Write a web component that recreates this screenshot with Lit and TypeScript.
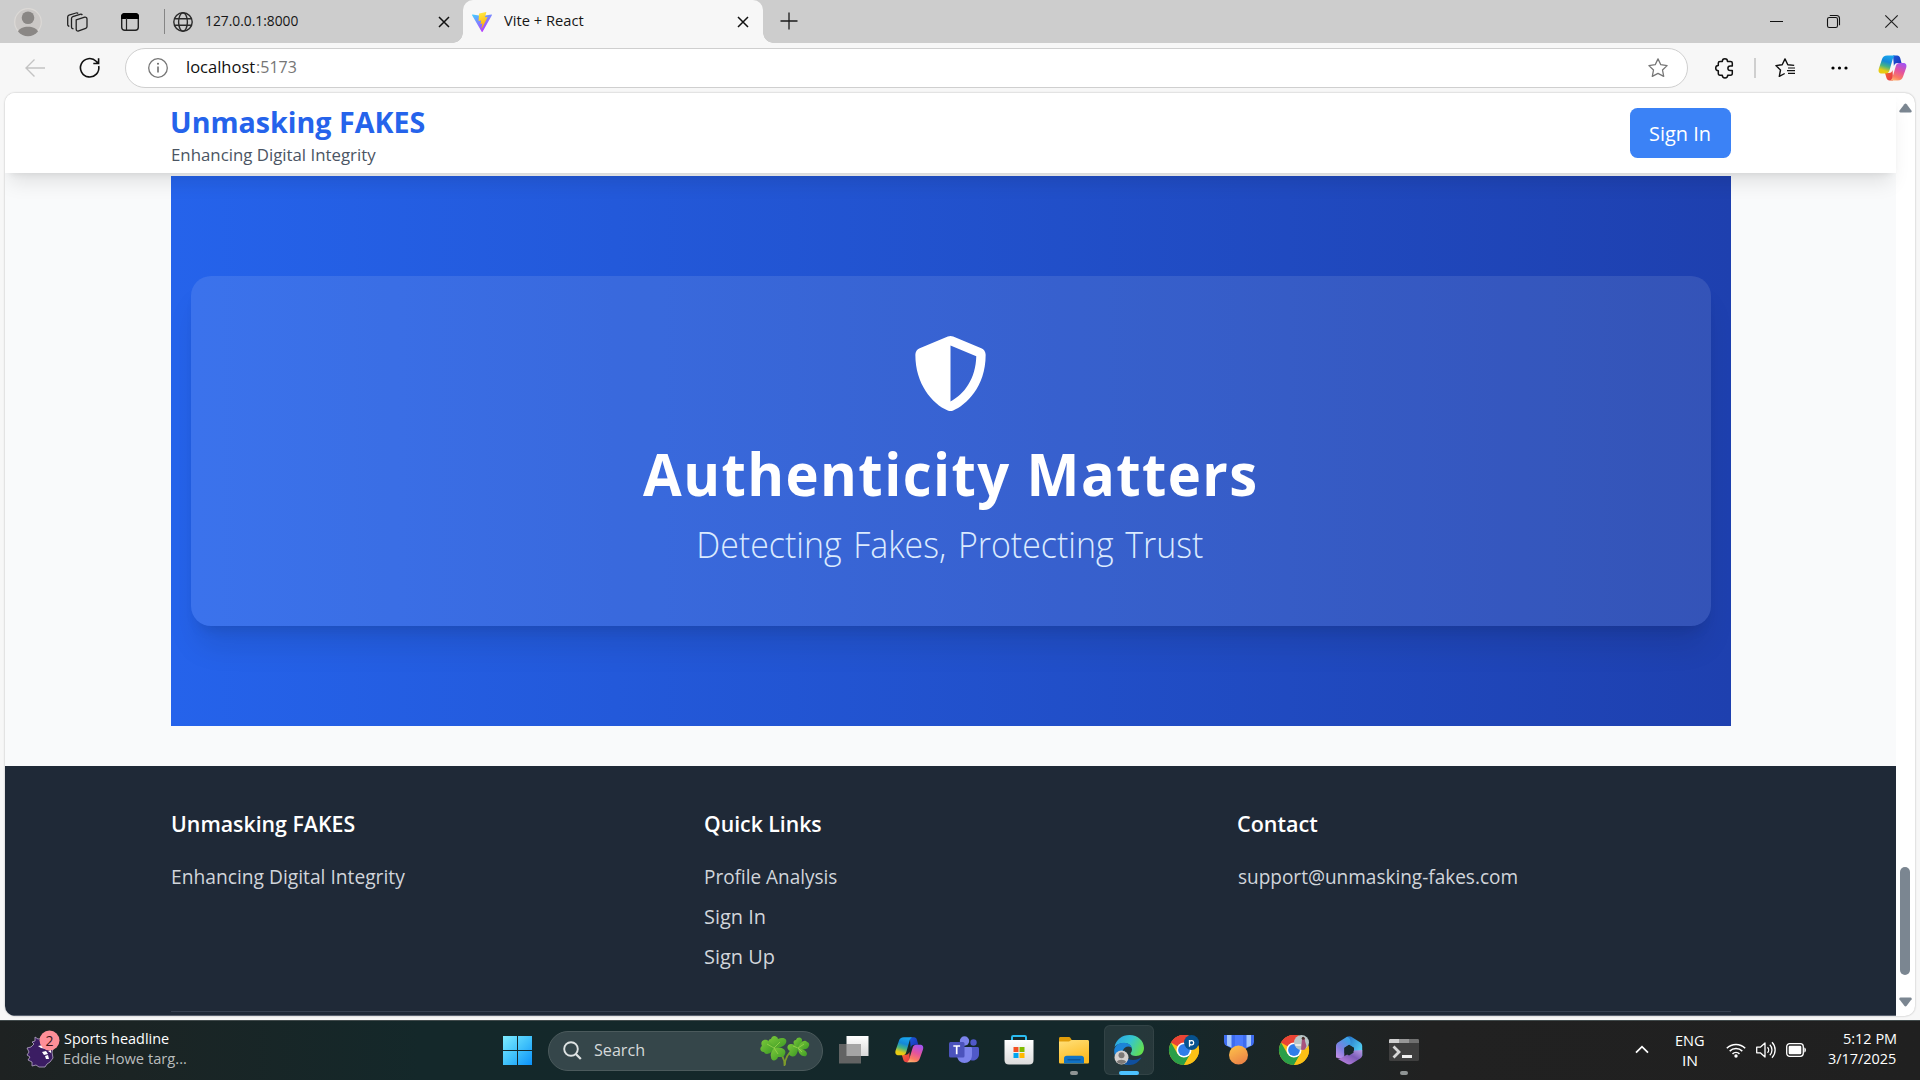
import { LitElement, html, css, svg } from "lit";
import { customElement, property } from "lit/decorators.js";

/* Single-line label whose glyphs span exactly `w` pixels. */
@customElement("fit-text")
class FitText extends LitElement {
  @property() text = "";
  @property({ type: Number }) w = 100;
  static styles = css`
    :host { display: block; flex: none; white-space: pre; }
    .t { display: inline-block; transform-origin: 0 0; vertical-align: top; }
  `;
  private ink = { left: 0, width: 0 };
  firstUpdated() {
    const cs = getComputedStyle(this);
    const ctx = document.createElement("canvas").getContext("2d") as any;
    ctx.font = `${cs.fontWeight} ${cs.fontSize} "Open Sans"`;
    if (cs.letterSpacing !== "normal") ctx.letterSpacing = cs.letterSpacing;
    if (parseFloat(cs.wordSpacing)) ctx.wordSpacing = cs.wordSpacing;
    const m = ctx.measureText(this.text);
    this.ink = { left: -m.actualBoundingBoxLeft, width: m.actualBoundingBoxRight + m.actualBoundingBoxLeft };
    this.requestUpdate();
  }
  render() {
    const s = this.ink.width ? this.w / this.ink.width : 1;
    this.style.width = `${this.w}px`;
    return html`<span class="t" style="transform: translateX(${-this.ink.left * s}px) scaleX(${s})">${this.text}</span>`;
  }
}

const closeX = (n: number) => html`<svg class="x" width="12" height="12" viewBox="0 0 12 12"><path d="M1 1L11 11M11 1L1 11" stroke="#111" stroke-width="${n}" fill="none"/></svg>`;

const copilot = (id: string) => svg`
  <defs>
    <linearGradient id="${id}a" x1=".6" y1="0" x2=".3" y2="1"><stop offset="0" stop-color="#19a6ee"/><stop offset=".35" stop-color="#1488d8"/><stop offset=".6" stop-color="#45b384"/><stop offset=".85" stop-color="#e8cb13"/></linearGradient>
    <linearGradient id="${id}b" x1=".7" y1="0" x2=".3" y2="1"><stop offset="0" stop-color="#a453f0"/><stop offset=".45" stop-color="#e4539d"/><stop offset=".8" stop-color="#fb7a62"/><stop offset="1" stop-color="#fcb070"/></linearGradient>
    <linearGradient id="${id}c" x1="0" y1="0" x2="1" y2="1"><stop offset="0" stop-color="#1b59d8"/><stop offset="1" stop-color="#1a30b8"/></linearGradient>
    <linearGradient id="${id}d" x1="0" y1="0" x2="1" y2="1"><stop offset="0" stop-color="#f8672c"/><stop offset="1" stop-color="#e4374c"/></linearGradient>
  </defs>
  <path d="M15 1.500h4.200c1.600 0 2.500 1 3 2.600L23.500 9h-4c-2 0-3 1-3.600 3z" fill="url(#${id}c)"/>
  <path d="M15 26.500h-3.500c-1.600 0-2.500-1-3-2.500L7 19h4c2 0 3-1 3.600-3z" fill="url(#${id}d)"/>
  <path d="M9.200 1.500h8.300c-1.700.6-2.300 2-2.900 4l-3 10.500c-.6 2-1.400 3.500-3.900 3.500H4c-3 0-4-1.800-3.200-4.800L3.900 5.600C4.700 3 6.400 1.500 9.200 1.500z" fill="url(#${id}a)"/>
  <path d="M19.800 26.500h-8c1.700-.6 2.300-2 2.900-4l3-10c.6-2 1.500-3.500 3.900-3.500H25c3 0 4 1.800 3.200 4.800l-3.100 8.600c-.9 2.600-2.500 4.100-5.300 4.100z" fill="url(#${id}b)"/>`;

const chrome = svg`
  <circle cx="15" cy="15" r="15" fill="#fbc116"/>
  <path d="M15 15L2 7.500A15 15 0 0 1 28 7.500z" fill="#ea4335"/>
  <path d="M2 7.500A15 15 0 0 1 28 7.500H15z" fill="#ea4335"/>
  <path d="M2 7.500L8.500 18.750L15 22.500L15 30A15 15 0 0 1 2 7.500z" fill="#2a9f48"/>
  <path d="M15 30L21.500 18.750L15 15L8.500 18.750L15 22z" fill="#2a9f48"/>
  <path d="M15 30L21.500 18.750V7.500H28A15 15 0 0 1 15 30z" fill="#fbc116"/>
  <circle cx="15" cy="15" r="7.500" fill="#fff"/><circle cx="15" cy="15" r="5.900" fill="#2f7de9"/>`;

const clover = svg`
  <path d="M25 30C25 24 28 18 34 14M24.500 31C25 24 22 18 14 13" stroke="#7d9a2c" stroke-width="1.600" fill="none"/>
  <g fill="url(#leaf)">
    <path d="M14 13C7 12 7 4 11 4C12 -1 18 1 18 4C22 2 28 3 26 8C24 12 19 13 14 13z"/>
    <path d="M14 13C11 20 5 20 4 17C-1 17 0 12 2 11C0 7 3 4 7 5C11 7 13 10 14 13z"/>
    <path d="M14 13C22 11 27 15 25 19C24 23 20 22 18 22C17 26 11 27 11 22C10 18 12 16 14 13z"/>
    <path d="M38 13C33 11 32 5 36 5C37 1 43 2 42 6C41 10 40 12 38 13z"/>
    <path d="M38 13C40 7 45 4 47 7C51 8 49 13 46 14C43 15 40 14 38 13z"/>
    <path d="M38 13C45 14 49 18 46 21C42 22 38 19 38 13z"/>
    <path d="M38 13C38 19 35 23 31 21C28 20 29 17 30 16C26 14 27 9 31 9C34 9 36 11 38 13z"/>
  </g>
  <path d="M14 13L7 9M14 13L20 7M14 13L18 19M38 13L33 11M38 13L42 17M38 13L44 9" stroke="#a9dd55" stroke-width=".8" opacity=".8"/>`;

const tasks = [
  { mark: "", art: svg`<path d="M7.500 1h22v20h-22z" fill="url(#tv)"/><path d="M0 9h22v19.500H0z" fill="#666" opacity=".95"/><path d="M7.500 9H22v12H7.500z" fill="#a5a5a5"/>` },
  { mark: "", art: svg`<g transform="translate(.8 .8)">${copilot("k")}</g>` },
  { mark: "", art: svg`
      <circle cx="24.500" cy="7.500" r="3.200" fill="#5059c9"/><circle cx="15.500" cy="6" r="4.700" fill="#7b83eb"/>
      <path d="M20 12h8.500c.8 0 1.500.6 1.500 1.500V19c0 4-3 6.500-6 6.500s-5-2-5-5z" fill="#5059c9"/>
      <path d="M9 12h12.500c1 0 1.500.6 1.500 1.500V20c0 5-3.500 8-7.500 8S8 25 8 20z" fill="#7b83eb"/>
      <rect x="0" y="7" width="15.500" height="15.500" rx="1.500" fill="#4b53bc"/>
      <path d="M4.300 11h6.800M7.700 11v8.300" stroke="#fff" stroke-width="1.700"/>` },
  { mark: "", art: svg`
      <path d="M8 7V2.200c0-.8.400-1.200 1.200-1.200h11.600c.8 0 1.200.4 1.200 1.200V7" fill="none" stroke="#2bbdf2" stroke-width="2"/>
      <path d="M.5 5h29v20c0 3-1.500 4.500-4.500 4.500H5C2 29.500.5 28 .5 25z" fill="url(#bag)"/>
      <path d="M9.500 12h5v5h-5z" fill="#f25022"/><path d="M15.500 12h5v5h-5z" fill="#7fba00"/><path d="M9.500 18h5v5h-5z" fill="#00a4ef"/><path d="M15.500 18h5v5h-5z" fill="#ffb900"/>` },
  { mark: "dot", art: svg`
      <path d="M0 3.500C0 2.500.6 2 1.500 2h8c1 0 1.500.3 2 1l1.500 2.500V8H0z" fill="#e19d0a"/>
      <path d="M0 6.500h10l2.500-1.500H28.500c1 0 1.500.6 1.500 1.500v20.500c0 1-.6 1.500-1.500 1.500h-27C.6 28.500 0 28 0 27z" fill="url(#fold)"/>
      <path d="M5 28.500V23.500c0-1.800 1-2.800 2.800-2.800h14.400c1.800 0 2.800 1 2.800 2.800v5z" fill="#1173c4"/><path d="M8.500 24.800h13" stroke="#0a4f93" stroke-width="1.200"/>` },
  { mark: "active", art: svg`
      <path d="M.5 12C2 4.500 8 0 15.500 0 24 0 30 6 30 13c0 5-3.500 8-8 8-3.500 0-5.500-1.500-5.500-2.500 0-.8 1.500-1.500 1.500-4C18 11 15 8 10.500 8 6 8 2 10 .5 12z" fill="url(#eg)"/>
      <path d="M.2 17C-.2 11 4.500 7.800 10 7.800c5 0 8 3.200 8 6.700-.3-1.800-1.500-3-3.500-3C9 11.500 8 17 9 20.500 10.500 26 15 29.500 18 29.300 9 31.500.8 26 .2 17z" fill="#1c84d8"/>
      <path d="M11.500 14C9 19 12 25 19 25c4 0 7-2 8.500-2.500C25 27 20.500 30 16 30 9 30 4.500 22 11.500 14z" fill="#0f4f9e"/>
      <circle cx="7.500" cy="22.500" r="7" fill="#d4d0ce"/><circle cx="7.500" cy="20.300" r="3" fill="#7d7977"/><path d="M2.700 27c1.500-3 8-3 9.600 0a7 7 0 0 1-9.600 0z" fill="#7d7977"/>` },
  { mark: "", art: svg`${chrome}<circle cx="22.500" cy="7.500" r="7.500" fill="#07528f"/><path d="M20.500 11.800V5M20.500 6.700c1-1.700 4.200-1.600 4.200 1s-3.200 2.700-4.200 1.100" fill="none" stroke="#fff" stroke-width="1.300"/>` },
  { mark: "", art: svg`
      <path d="M0 0h30v6.500c0 2-1 3.500-3 4.500l-6 3H9l-6-3c-2-1-3-2.500-3-4.500z" fill="#3d6cf0"/>
      <path d="M3 0h4.500v12.500L3 10.500zM22.500 0H27v10.500l-4.500 2z" fill="#a4c6fb"/><path d="M11 0h8v13h-8z" fill="#4b7bff"/>
      <circle cx="14.500" cy="20" r="9.500" fill="url(#med)"/>` },
  { mark: "", art: svg`${chrome}<circle cx="22.500" cy="7.500" r="7.500" fill="#b9c7c8"/><path d="M23 3.500c2-2 3.500.5 3 2.500l1.500 5-1.500 3.500c-1.500.6-3 .4-4 0l.5-5z" fill="#a8537e"/><circle cx="24.200" cy="3.300" r="1.500" fill="#4a302c"/><path d="M16 9h6v2h-5.500z" fill="#e8e8e2"/>` },
  { mark: "", art: svg`
      <path d="M13 1.800C14.300 1 16 1 17.300 1.800L26 7.200C27.500 8.200 28.200 9.500 28.200 11V21L20 16.500V12.800L10.500 7z" fill="url(#m1)"/>
      <path d="M13 1.800L4.300 7.200C2.700 8.200 2 9.500 2 11v11.500l8.300 2V12.800l6.200-4C17 5 15.500 2.500 13 1.800z" fill="url(#m2)"/>
      <path d="M28.200 15v5c0 1.500-.7 2.700-2 3.500l-8.500 5.200c-1.700 1-3.300 1-5 0L3 23.500c1.500.5 3 .2 4.500-.7L20 15.500z" fill="url(#m3)"/>
      <path d="M15 10.300l4.500 2.500v5L15 20.500l-4.500-2.600v-5z" fill="#17292c"/>` },
  { mark: "dot", art: svg`
      <rect x="0" y="4" width="30" height="22" rx="1.500" fill="#3f3f3f"/><path d="M0 8V5.500C0 4.500.6 4 1.500 4H10v4z" fill="#d0d0d0"/><path d="M10 4h10v4H10z" fill="#979797"/><path d="M20 4h8.500c.9 0 1.500.5 1.500 1.500V8H20z" fill="#707070"/>
      <path d="M4.500 11.500l5.500 5.500-5.500 5.500" fill="none" stroke="#d6d6d6" stroke-width="2.800"/><path d="M13 20h10v3H13z" fill="#eee"/>` },
];

@customElement("app-root")
class AppRoot extends LitElement {
  static styles = css`
    :host { display: block; width: 1920px; height: 1080px; overflow: hidden; font-family: "Open Sans", "Noto Sans", sans-serif; background: #f7f7f7; }
    * { box-sizing: border-box; }
    svg { display: block; flex: none; overflow: visible; }
    .screen { display: flex; flex-direction: column; height: 1080px; }

    .tabs { height: 43px; background: #cdcdcd; display: flex; align-items: center; flex: none; }
    .avatar { margin-left: 14px; }
    .spaces { margin-left: 25px; }
    .vtabs { margin-left: 33px; }
    .sep { width: 1px; height: 25px; background: #858585; margin-left: 25px; }
    .globe { margin-left: 8px; margin-top: 1px; }
    .label { font-size: 14.600px; line-height: 20px; color: #161616; margin: -4px 0 0 13px; }
    .tab1 { display: flex; align-items: center; width: 298px; height: 43px; }
    .tab1 .x { margin: 1px 0 0 140px; }
    .tab2 { position: relative; display: flex; align-items: center; width: 300px; height: 43px; background: #f7f7f7; border-radius: 10px 10px 0 0; }
    .tab2::before, .tab2::after { content: ""; position: absolute; bottom: 0; width: 10px; height: 10px; }
    .tab2::before { left: -10px; background: radial-gradient(circle at 0 0, transparent 9.500px, #f7f7f7 10px); }
    .tab2::after { right: -10px; background: radial-gradient(circle at 100% 0, transparent 9.500px, #f7f7f7 10px); }
    .tab2 .vite { margin: 1px 0 0 9px; }
    .tab2 .label { margin-left: 11.500px; }
    .tab2 .x { margin: 1px 0 0 153.500px; }
    .plus { margin: -1px 0 0 17px; }
    .win { display: flex; align-items: center; margin-left: auto; padding-right: 22.500px; gap: 44.500px; }

    .tools { height: 50px; flex: none; display: flex; align-items: center; }
    .back { margin: -1px 0 0 25px; }
    .reload { margin-left: 35px; }
    .omni { margin-left: 25px; width: 1563px; height: 40px; border: 1px solid #cfcfcf; border-radius: 20px; background: #fff; display: flex; align-items: center; padding: 0 19px 0 22px; }
    .url { display: flex; font-size: 17.200px; line-height: 24px; margin: -2px 0 0 19px; color: #111; }
    .url .port { color: #767676; margin-left: 2px; }
    .omni .star { margin-left: auto; }
    .ext { margin-left: 27px; }
    .tsep { width: 2px; height: 20px; background: #cfcfcf; margin-left: 20px; }
    .fav { margin-left: 19px; }
    .more { margin-left: 36px; }
    .cop { margin-left: 30px; }

    .page { height: 923px; margin: 0 5px; flex: none; display: flex; border-radius: 10px; overflow: hidden; background: #fff; box-shadow: 0 0 2px rgba(0, 0, 0, .3); }
    .view { width: 1891px; background: #f9fafb; display: flex; flex-direction: column; }
    .head { position: relative; height: 80px; flex: none; background: #fff; padding: 0 165px 0 166px; display: flex; justify-content: space-between; align-items: center; box-shadow: 0 12.500px 18.750px -3.750px rgba(0, 0, 0, .1), 0 5px 7.500px -5px rgba(0, 0, 0, .1); }
    .brand { color: #2563eb; font-weight: 700; font-size: 29.400px; line-height: 40px; margin: 3px 0 0 .7px; }
    .tag { color: #4b5563; font-size: 17.100px; line-height: 25px; margin-left: .5px; }
    .btn { width: 101px; height: 50px; border: 0; border-radius: 7.500px; background: #3b82f6; color: #fff; display: flex; justify-content: center; font-size: 19.400px; line-height: 52px; padding-right: 1px; }
    .hero { width: 1560px; height: 550px; margin: 3px 0 40px 166px; flex: none; padding: 100px 20px; background: linear-gradient(90deg, #2563eb, #1e40af); }
    .card { height: 350px; border-radius: 20px; background: rgba(255, 255, 255, .1); box-shadow: 0 25px 31px -6px rgba(0, 0, 0, .1), 0 10px 12.500px -7.500px rgba(0, 0, 0, .1); display: flex; flex-direction: column; align-items: center; padding: 60px 1.500px 0 0; color: #fff; }
    .h1 { font-size: 58.800px; font-weight: 700; line-height: 75px; letter-spacing: 1.500px; margin: 25px 0 0 -2px; }
    .h2 { font-size: 36.900px; font-weight: 300; line-height: 50px; margin: 8px 0 0 2px; color: #dbeafe; word-spacing: 3px; }
    .foot { height: 250px; flex: none; background: #1f2937; padding: 40px 165px 0 166px; display: flex; flex-direction: column; border-bottom: 1px solid #5a6270; }
    .cols { display: grid; grid-template-columns: 533px 533px 1fr; height: 205px; }
    .ft { font-size: 22px; font-weight: 600; line-height: 35px; color: #fff; margin: 0 0 21px .6px; }
    .fl { font-size: 19.500px; line-height: 30px; color: #d1d5db; margin: 0 0 10px .6px; }
    .rule { height: 1px; background: #374151; }
    .scroll { width: 19px; display: flex; flex-direction: column; align-items: center; padding: 10px 1px 9px 0; }
    .thumb { width: 10px; height: 108px; border-radius: 5px; background: #7b8691; margin: auto 0 22px; }

    .bar { margin-top: 4px; height: 60px; border-top: 1px solid #414a4b; display: flex; align-items: center; background: linear-gradient(90deg, #1e2222 0, #1b2424 130px, #14282a 420px, #14282b 1140px, #1b2526 1290px, #212121 1430px, #202020 100%); color: #fff; }
    .news { margin: -4px 0 0 27.500px; }
    .two { font-size: 14px; fill: #3a1418; text-anchor: middle; }
    .newst { margin: -5px 0 0 11px; font-size: 14.600px; line-height: 20px; }
    .newst .dim { color: #b9bcbc; }
    .start { margin: 0 0 0 316.500px; }
    .search { margin: 0 0 0 16px; width: 275px; height: 40px; border-radius: 20px; border: 1px solid #4b5a5c; background: #35464a; display: flex; align-items: center; padding: 0 12px 0 14px; font-size: 17.200px; line-height: 24px; color: #d5d9da; }
    .search fit-text { margin: -1px 0 0 12px; }
    .search .clover { margin: 0 0 0 auto; }
    .apps { display: flex; margin: -1px 0 0 4px; }
    .app { position: relative; width: 55px; height: 50px; display: flex; justify-content: center; align-items: center; }
    .app::after { content: ""; position: absolute; bottom: 0; height: 4px; border-radius: 2px; }
    .app.dot::after { width: 8px; background: #8f9494; }
    .app.active::after { width: 20px; background: #4cc2ff; }
    .app.active::before { content: ""; position: absolute; inset: 0 2.500px; border-radius: 6px; background: rgba(255, 255, 255, .08); border: 1px solid rgba(255, 255, 255, .06); }
    .app svg { position: relative; }
    .tray { margin-left: auto; display: flex; align-items: center; padding-right: 24.500px; font-size: 14.600px; line-height: 20px; }
    .chev { margin-top: -2px; }
    .lang { display: flex; flex-direction: column; align-items: center; margin: -2px 22px 0 27px; }
    .icons { display: flex; gap: 10px; align-items: center; margin-top: -1px; }
    .clock { display: flex; flex-direction: column; align-items: flex-end; margin: -5px 0 0 21.500px; }
  `;

  render() {
    return html`<div class="screen">
      <div class="tabs">
        <svg class="avatar" width="28" height="28" viewBox="0 0 28 28"><circle cx="14" cy="14" r="13.300" fill="#cbc8c6" stroke="#dcd9d6" stroke-width="1.200"/><circle cx="14" cy="9.800" r="6.300" fill="#8a8785"/><path d="M4 23.500C6 17 22 17 24 23.500a13 13 0 0 1-20 0z" fill="#8a8785"/></svg>
        <svg class="spaces" width="21" height="20" viewBox="0 0 21 20" fill="none" stroke="#222" stroke-width="1.300" stroke-linejoin="round"><path d="M9.200 7.800l8.500-2.600c1.200-.3 2.300.4 2.300 1.700v7.600c0 .9-.5 1.500-1.300 1.800l-7 2.600c-1.400.5-2.500-.3-2.500-1.700z"/><path d="M6.500 17l-1.300-.6c-.5-.3-.7-.8-.7-1.400V6.500c0-1 .4-1.600 1.300-1.900L13 2.300c1-.3 1.900 0 2.300.8"/><path d="M2.300 14.500l-.9-.6c-.5-.3-.7-.8-.7-1.400V5c0-1 .5-1.600 1.300-1.900L9 1c1-.3 1.800 0 2.200.5"/></svg>
        <svg class="vtabs" width="18" height="18" viewBox="0 0 18 18"><rect x=".7" y=".7" width="16.600" height="16.600" rx="3" fill="none" stroke="#222" stroke-width="1.400"/><path d="M0 3.500C0 1.500 1.500 0 3.500 0h11C16.500 0 18 1.500 18 3.500V6H0z" fill="#000"/><path d="M5.500 5v12" stroke="#222" stroke-width="1.200"/></svg>
        <div class="sep"></div>
        <div class="tab1">
          <svg class="globe" width="20" height="20" viewBox="0 0 20 20" fill="none" stroke="#2b2b2b" stroke-width="1.400"><circle cx="10" cy="10" r="9.200"/><ellipse cx="10" cy="10" rx="4.400" ry="9.200"/><path d="M1.500 6.700h17M1.500 13.300h17"/></svg>
          <fit-text class="label" .w=${92} text="127.0.0.1:8000"></fit-text>
          ${closeX(1.5)}
        </div>
        <div class="tab2">
          <svg class="vite" width="20" height="20" viewBox="0 0 20 20"><defs><linearGradient id="v1" x1="0" y1="0" x2=".6" y2="1"><stop offset="0" stop-color="#41d1ff"/><stop offset="1" stop-color="#bd34fe"/></linearGradient><linearGradient id="v2" x1=".4" y1="0" x2=".6" y2="1"><stop offset="0" stop-color="#ffea42"/><stop offset="1" stop-color="#ffa800"/></linearGradient></defs><path d="M19.900 3.200L10.600 19.700c-.2.300-.7.300-.9 0L.1 3.200c-.2-.4.100-.8.500-.8L10 4.100l9.400-1.700c.4 0 .7.400.5.800z" fill="url(#v1)"/><path d="M14.100 0L7.200 1.400c-.1 0-.2.100-.2.200l-.4 7.200c0 .2.100.3.300.3l1.900-.5c.2 0 .4.100.3.300l-.6 2.800c0 .2.200.4.400.3l1.200-.4c.2 0 .4.100.3.300l-.9 4.400c-.1.300.300.4.400.2l.1-.2 5.500-11c.1-.2-.1-.4-.3-.4l-1.900.4c-.2 0-.3-.2-.3-.4l1.300-4.500c.1-.2-.1-.4-.2-.4z" fill="url(#v2)"/></svg>
          <fit-text class="label" .w=${79.5} text="Vite + React"></fit-text>
          ${closeX(1.5)}
        </div>
        <svg class="plus" width="18" height="18" viewBox="0 0 18 18"><path d="M9 0.500v17M0.500 9h17" stroke="#1a1a1a" stroke-width="1.300"/></svg>
        <div class="win">
          <svg width="13" height="13" viewBox="0 0 13 13"><path d="M0 6.500h13" stroke="#111" stroke-width="1"/></svg>
          <svg width="13" height="13" viewBox="0 0 13 13" fill="none" stroke="#111" stroke-width="1.100"><rect x=".5" y="2.500" width="10" height="10" rx="1.800"/><path d="M2.800.5h6.700c2 0 3 1 3 3v6.700"/></svg>
          <svg width="13" height="13" viewBox="0 0 13 13"><path d="M.3.300l12.400 12.400M12.700.300L.3 12.700" stroke="#222" stroke-width="1.200"/></svg>
        </div>
      </div>

      <div class="tools">
        <svg class="back" width="20" height="18" viewBox="0 0 20 18" fill="none" stroke="#c3c3c3" stroke-width="1.400"><path d="M20 9H1M9.500.5L1 9l8.500 8.500"/></svg>
        <svg class="reload" width="20" height="20" viewBox="0 0 20 20" fill="none" stroke="#111" stroke-width="1.600"><path d="M18.700 8A9.200 9.200 0 1 1 16.200 3.300L18.500 5.300M18.600.3v5.200h-5.300"/></svg>
        <div class="omni">
          <svg width="20" height="20" viewBox="0 0 20 20"><circle cx="10" cy="10" r="9.300" fill="none" stroke="#767676" stroke-width="1.300"/><path d="M10 8.500v6" stroke="#666" stroke-width="1.500"/><circle cx="10" cy="5.800" r="1" fill="#666"/></svg>
          <div class="url"><fit-text .w=${68} text="localhost"></fit-text><fit-text class="port" .w=${39} text=":5173"></fit-text></div>
          <svg class="star" width="20" height="20" viewBox="0 0 20 20"><path d="M10 .9l2.800 5.800 6.300.9-4.600 4.400 1.200 6.400L10 15.400l-5.700 3 1.200-6.400L.9 7.600l6.300-.9z" fill="none" stroke="#767676" stroke-width="1.300" stroke-linejoin="round"/></svg>
        </div>
        <svg class="ext" width="19" height="20" viewBox="0 0 19 20"><path d="M7.300 3.400A2.600 2.600 0 0 1 12.500 3.400H15.500Q17.300 3.400 17.300 5V8H15.200A2.300 2.300 0 0 0 15.200 12.600H17.300V15.500Q17.300 17.200 15.500 17.200H12.700A2.600 2.600 0 0 1 7.300 17.200H5Q3.300 17.200 3.300 15.500V12.700A2.600 2.600 0 0 1 3.300 7.500V5Q3.300 3.400 5 3.400z" fill="none" stroke="#111" stroke-width="1.500" stroke-linejoin="round"/></svg>
        <div class="tsep"></div>
        <svg class="fav" width="20" height="20" viewBox="0 0 20 20" fill="none" stroke="#111" stroke-width="1.400" stroke-linejoin="round"><path d="M19.200 7.400l-6.400-.7L10 .9 7.200 6.700l-6.300.9 4.600 4.400-1.200 6.400 5.400-2.900"/><path d="M13 10h7M12 12.700h8M13 15.400h7" stroke-width="1.200"/></svg>
        <svg class="more" width="17" height="4" viewBox="0 0 17 4"><circle cx="2" cy="2" r="1.600"/><circle cx="8.500" cy="2" r="1.600"/><circle cx="15" cy="2" r="1.600"/></svg>
        <svg class="cop" width="29" height="28" viewBox="0 0 29 28">${copilot("t")}</svg>
      </div>

      <div class="page">
        <div class="view">
          <div class="head">
            <div>
              <fit-text class="brand" .w=${253} text="Unmasking FAKES"></fit-text>
              <fit-text class="tag" .w=${204} text="Enhancing Digital Integrity"></fit-text>
            </div>
            <div class="btn"><fit-text .w=${60} text="Sign In"></fit-text></div>
          </div>
          <div class="hero"><div class="card">
            <svg width="75" height="75" viewBox="0 0 512 512" fill="#fff"><path d="M466.500 83.700l-192-80a48.150 48.150 0 0 0-36.900 0l-192 80C27.700 91.100 16 108.600 16 128c0 198.500 114.500 335.700 221.500 380.300 11.800 4.900 25.100 4.900 36.900 0C360.100 472.600 496 349.300 496 128c0-19.400-11.700-36.900-29.500-44.300zM256.100 446.300l-.1-381 175.900 73.300c-3.300 151.400-82.100 261.100-175.800 307.700z"/></svg>
            <fit-text class="h1" .w=${612} text="Authenticity Matters"></fit-text>
            <fit-text class="h2" .w=${504} text="Detecting Fakes, Protecting Trust"></fit-text>
          </div></div>
          <div class="foot">
            <div class="cols">
              <div><fit-text class="ft" .w=${183} text="Unmasking FAKES"></fit-text><fit-text class="fl" .w=${233} text="Enhancing Digital Integrity"></fit-text></div>
              <div><fit-text class="ft" .w=${116} text="Quick Links"></fit-text><fit-text class="fl" .w=${132} text="Profile Analysis"></fit-text><fit-text class="fl" .w=${60} text="Sign In"></fit-text><fit-text class="fl" .w=${69} text="Sign Up"></fit-text></div>
              <div><fit-text class="ft" .w=${80} text="Contact"></fit-text><fit-text class="fl" .w=${279} text="support@unmasking-fakes.com"></fit-text></div>
            </div>
            <div class="rule"></div>
          </div>
        </div>
        <div class="scroll">
          <svg width="13" height="10" viewBox="0 0 13 10"><path d="M5.300 1.200q1.200-1.400 2.400 0l4.900 6.500q.6 1.700-1 1.800H1.400q-1.600-.1-1-1.800z" fill="#7b8691"/></svg>
          <div class="thumb"></div>
          <svg width="13" height="10" viewBox="0 0 13 10"><path d="M5.300 8.800q1.200 1.400 2.400 0l4.900-6.500q.6-1.700-1-1.800H1.400q-1.600.1-1 1.800z" fill="#7b8691"/></svg>
        </div>
      </div>

      <div class="bar">
        <svg class="news" width="25.500" height="38" viewBox="0 0 25.500 38"><path d="M6 14l-2-2 3-1V7l3 2 6-1 5 4 4 7-1 3 1 6-3 4-3 2-2 3h-6l-3-2-4 1 0-4-4-2 2-3-3-2 2-3-2-4 4-1z" fill="#3b1d63" stroke="#b7a9c8" stroke-width=".8"/><path d="M14 22l4-1 2 3-4 1zM20 21l3-1 0 3zM17 26l3-1 1 4-3 0zM10 16l3 2 5 1-3-4z" fill="#fff"/><circle cx="21.500" cy="10.500" r="10" fill="#ff8f98"/><text class="two" x="21.500" y="15.500">2</text></svg>
        <div class="newst"><fit-text .w=${105} text="Sports headline"></fit-text><fit-text class="dim" .w=${122} text="Eddie Howe targ..."></fit-text></div>
        <svg class="start" width="29" height="29" viewBox="0 0 29 29"><defs>
          <linearGradient id="w" x1="0" y1="0" x2="1" y2="1" ><stop offset="0" stop-color="#7eebff"/><stop offset=".5" stop-color="#42c3fb"/><stop offset="1" stop-color="#0b92fa"/></linearGradient>
          <linearGradient id="leaf" x1="0" y1="0" x2="1" y2="1"><stop offset="0" stop-color="#7cc93a"/><stop offset="1" stop-color="#3c9a25"/></linearGradient>
          <linearGradient id="tv" x1="0" y1="0" x2="0" y2="1"><stop offset="0" stop-color="#fff"/><stop offset="1" stop-color="#d8d8d8"/></linearGradient>
          <linearGradient id="bag" x1="0" y1="0" x2="0" y2="1"><stop offset="0" stop-color="#fff"/><stop offset="1" stop-color="#dcdcdc"/></linearGradient>
          <linearGradient id="fold" x1="0" y1="0" x2="0.400" y2="1"><stop offset="0" stop-color="#ffe07a"/><stop offset="1" stop-color="#fdbb22"/></linearGradient>
          <linearGradient id="eg" x1="0" y1=".2" x2="1" y2=".6"><stop offset="0" stop-color="#2ba5e6"/><stop offset=".5" stop-color="#35c5d0"/><stop offset="1" stop-color="#63e04e"/></linearGradient>
          <linearGradient id="med" x1="0" y1="0" x2=".5" y2="1"><stop offset="0" stop-color="#ffc64a"/><stop offset="1" stop-color="#ec8647"/></linearGradient>
          <linearGradient id="m1" x1="0" y1="0" x2="1" y2=".7"><stop offset="0" stop-color="#1c5fc0"/><stop offset="1" stop-color="#55d5f5"/></linearGradient>
          <linearGradient id="m2" x1=".6" y1="0" x2="0" y2="1"><stop offset="0" stop-color="#3ba2e6"/><stop offset=".5" stop-color="#7f7fe0"/><stop offset="1" stop-color="#d493e8"/></linearGradient>
          <linearGradient id="m3" x1="0" y1="1" x2="1" y2="0"><stop offset="0" stop-color="#c98be8"/><stop offset=".6" stop-color="#7d5cb8"/><stop offset="1" stop-color="#b8a0e8"/></linearGradient>
          </defs><path d="M0 0h14v14H0zM15 0h14v14H15zM0 15h14v14H0zM15 15h14v14H15z" fill="url(#w)"/></svg>
        <div class="search">
          <svg width="19" height="19" viewBox="0 0 19 19" fill="none" stroke="#dfe3e3"><circle cx="8" cy="8" r="6.800" stroke-width="1.900"/><path d="M12.800 13l5 5" stroke-width="2.300"/></svg>
          <fit-text .w=${50.5} text="Search"></fit-text>
          <svg class="clover" width="50" height="32" viewBox="0 0 50 32">${clover}</svg>
        </div>
        <div class="apps">${tasks.map((t) => html`<div class="app ${t.mark}"><svg width="30" height="30" viewBox="0 0 30 30">${t.art}</svg></div>`)}</div>
        <div class="tray">
          <svg class="chev" width="14" height="9" viewBox="0 0 14 9"><path d="M1 7.700l6-6 6 6" fill="none" stroke="#fff" stroke-width="1.800"/></svg>
          <div class="lang"><fit-text .w=${28} text="ENG"></fit-text><fit-text .w=${14} text="IN"></fit-text></div>
          <div class="icons">
            <svg width="20" height="16" viewBox="0 0 20 16" fill="none" stroke="#fff" stroke-width="1.500"><path d="M.8 6.300a13 13 0 0 1 18.400 0M3.700 9.100a9 9 0 0 1 12.600 0M6.500 11.900a5 5 0 0 1 7 0"/><circle cx="10" cy="14" r="1.700" fill="#fff" stroke="none"/></svg>
            <svg width="20" height="18" viewBox="0 0 20 18" fill="none" stroke="#fff" stroke-width="1.300" stroke-linejoin="round"><path d="M.7 6.200h3.600L9 2v14l-4.700-4.200H.7z"/><path d="M11.500 6.200a4 4 0 0 1 0 5.600M13.800 3.800a7.300 7.300 0 0 1 0 10.400M16 1.300a11 11 0 0 1 0 15.400"/></svg>
            <svg width="20" height="14" viewBox="0 0 20 14"><rect x=".7" y=".7" width="16.600" height="12.600" rx="3" fill="none" stroke="#fff" stroke-width="1.300"/><rect x="2.700" y="2.700" width="12.600" height="8.600" rx="1.200" fill="#fff"/><path d="M18.300 4.500c2.200.5 2.200 4.500 0 5z" fill="#fff"/></svg>
          </div>
          <div class="clock"><fit-text .w=${53} text="5:12 PM"></fit-text><fit-text .w=${68} text="3/17/2025"></fit-text></div>
        </div>
      </div>
    </div>`;
  }
}
